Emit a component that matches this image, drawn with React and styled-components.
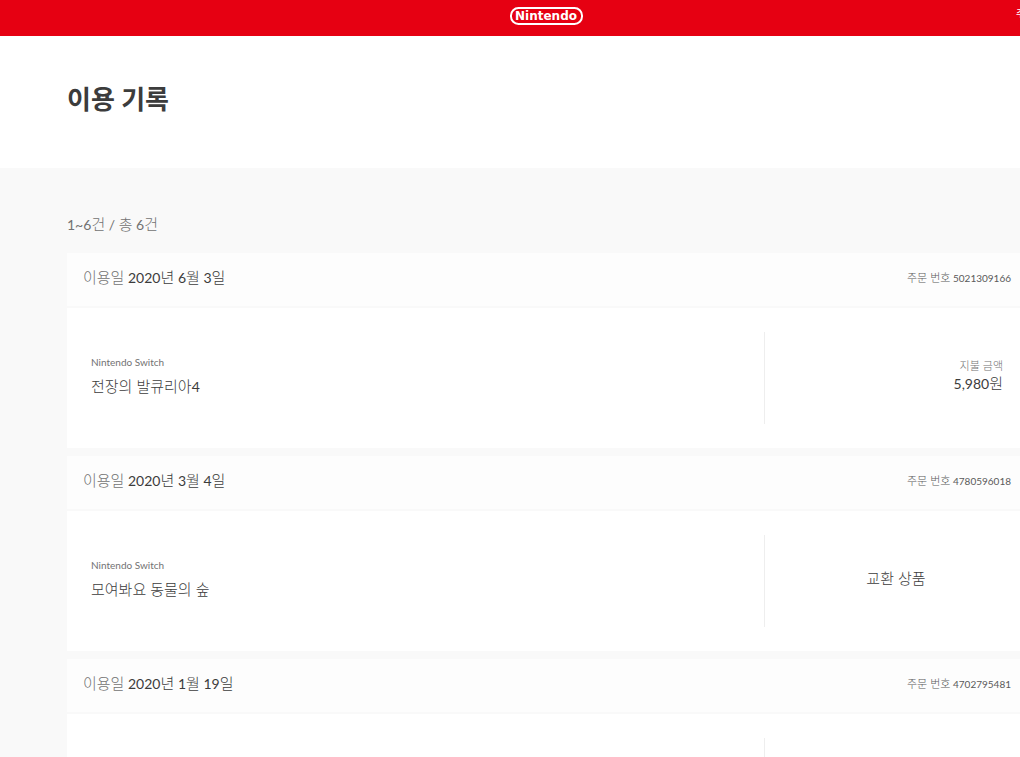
import React from "react";
import styled, { createGlobalStyle } from "styled-components";

const GlobalStyle = createGlobalStyle`
  *, *::before, *::after { box-sizing: border-box; }
  html { overflow-x: hidden; background: #f9f9f9; }
  body {
    margin: 0;
    color: #3c3c3c;
    font-family: Lato, "Noto Sans CJK KR", sans-serif;
    font-size: 14px;
    line-height: 20px;
  }
  h1, p { margin: 0; }
  ul { list-style: none; margin: 0; padding: 0; }
`;

const Page = styled.div`
  min-width: 1094px;
`;

const Container = styled.div`
  max-width: 960px;
  margin: 0 auto;
`;

const TopBar = styled.header`
  display: grid;
  grid-template-columns: 1fr auto 1fr;
  align-items: start;
  height: 36px;
  padding: 7px 6px 0;
  background: #e60012;
`;

const LogoLink = styled.a`
  grid-column: 2;
  display: block;
  height: 18px;
`;

const TopLink = styled.a`
  justify-self: end;
  color: #fff;
  font-size: 10px;
  line-height: 12px;
  text-decoration: none;
`;

const TitleBand = styled.div`
  height: 132px;
  padding-top: 45px;
  background: #fff;
`;

const Title = styled.h1`
  font-size: 26px;
  font-weight: 700;
  line-height: 36px;
`;

const Count = styled.p`
  padding: 47px 0 18px;
  color: #727272;
`;

const OrderList = styled.ul`
  display: flex;
  flex-direction: column;
  gap: 8px;
`;

const OrderCard = styled.li`
  background: #fff;
`;

const OrderHead = styled.div`
  display: flex;
  justify-content: space-between;
  align-items: center;
  height: 55px;
  padding: 0 16px 4px;
  border-bottom: 2px solid #f9f9f9;
  background: #fdfdfd;
`;

const Label = styled.span`
  color: #727272;
`;

/* Hangul is set one size up and lighter so it balances with Lato. */
const Hangul = styled.span`
  font-size: ${(p) => (p.$small ? 11 : 15)}px;
  font-weight: 300;
  line-height: 1;
`;

const Small = styled.span`
  display: block;
  color: ${(p) => (p.$strong ? "#5a5a5a" : "#727272")};
  font-size: 10px;
  line-height: 16px;
`;

const OrderBody = styled.div`
  display: grid;
  grid-template-columns: 1fr 263px;
  padding: 24px 0;
`;

const Product = styled.div`
  display: flex;
  flex-direction: column;
  justify-content: center;
  gap: 7px;
  height: 92px;
  padding: 0 24px 6px;
`;

const Payment = styled.div`
  display: flex;
  flex-direction: column;
  justify-content: center;
  align-items: ${(p) => (p.$centered ? "center" : "flex-end")};
  padding: 0 24px 4px;
  border-left: 1px solid #eee;
`;

const orders = [
  { date: "2020년 6월 3일", number: "5021309166", platform: "Nintendo Switch", title: "전장의 발큐리아4", amount: "5,980원" },
  { date: "2020년 3월 4일", number: "4780596018", platform: "Nintendo Switch", title: "모여봐요 동물의 숲", note: "교환 상품" },
  { date: "2020년 1월 19일", number: "4702795481" },
];

function Text({ children, small }) {
  return children.split(/([가-힣]+(?: [가-힣]+)*)/).map((part, i) =>
    i % 2 ? <Hangul key={i} $small={small}>{part}</Hangul> : part
  );
}

function Logo() {
  return (
    <svg width="74" height="18" viewBox="0 0 74 18" role="img" aria-label="Nintendo">
      <rect x="1" y="1" width="71" height="16" rx="7.5" fill="none" stroke="#fff" strokeWidth="2" />
      <text x="36" y="13" textAnchor="middle" fill="#fff" fontFamily="'DejaVu Sans', sans-serif" fontSize="12" fontWeight="700">
        Nintendo
      </text>
    </svg>
  );
}

function Order({ date, number, platform, title, amount, note }) {
  return (
    <OrderCard>
      <OrderHead>
        <p><Label><Text>이용일</Text></Label> <Text>{date}</Text></p>
        <Small $strong><Text small>{`주문 번호 ${number}`}</Text></Small>
      </OrderHead>
      <OrderBody>
        <Product>
          {platform && <Small>{platform}</Small>}
          {title && <span><Text>{title}</Text></span>}
        </Product>
        <Payment $centered={Boolean(note)}>
          {amount && <Small><Text small>지불 금액</Text></Small>}
          {amount && <span><Text>{amount}</Text></span>}
          {note && <span><Text>{note}</Text></span>}
        </Payment>
      </OrderBody>
    </OrderCard>
  );
}

export default function App() {
  return (
    <>
      <GlobalStyle />
      <Page>
        <TopBar>
          <LogoLink href="#"><Logo /></LogoLink>
          <TopLink href="#">주문 및 이용 기록</TopLink>
        </TopBar>
        <main>
          <TitleBand>
            <Container><Title>이용 기록</Title></Container>
          </TitleBand>
          <Container>
            <Count><Text>1~6건 / 총 6건</Text></Count>
            <OrderList>
              {orders.map((o) => <Order key={o.number} {...o} />)}
            </OrderList>
          </Container>
        </main>
      </Page>
    </>
  );
}
